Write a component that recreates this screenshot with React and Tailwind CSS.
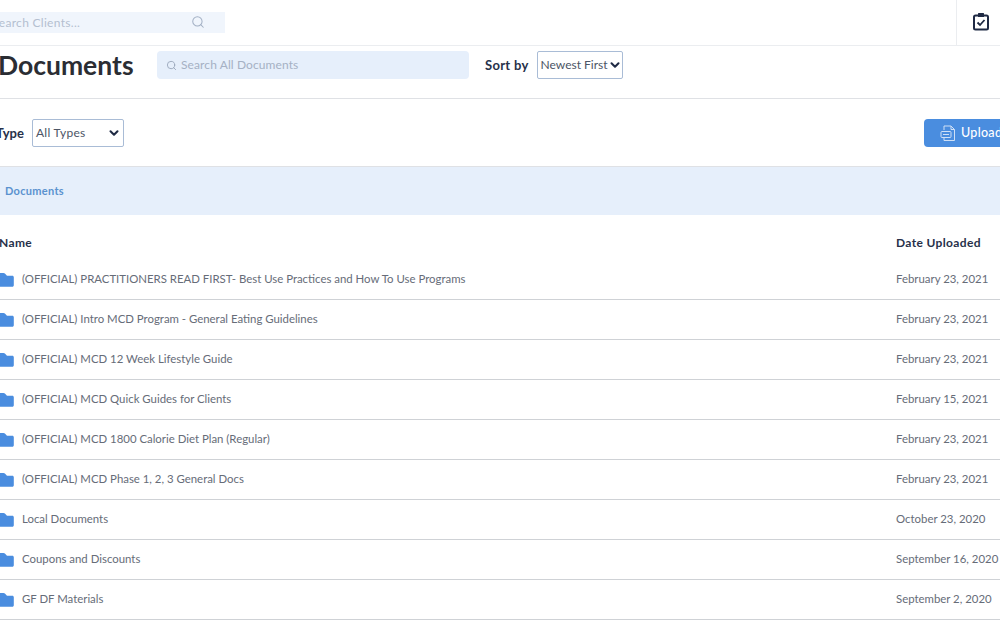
import { Search, ChevronDown } from 'lucide-react'

const rows = [
  ['(OFFICIAL) PRACTITIONERS READ FIRST- Best Use Practices and How To Use Programs', 'February 23, 2021'],
  ['(OFFICIAL) Intro MCD Program - General Eating Guidelines', 'February 23, 2021'],
  ['(OFFICIAL) MCD 12 Week Lifestyle Guide', 'February 23, 2021'],
  ['(OFFICIAL) MCD Quick Guides for Clients', 'February 15, 2021'],
  ['(OFFICIAL) MCD 1800 Calorie Diet Plan (Regular)', 'February 23, 2021'],
  ['(OFFICIAL) MCD Phase 1, 2, 3 General Docs', 'February 23, 2021'],
  ['Local Documents', 'October 23, 2020'],
  ['Coupons and Discounts', 'September 16, 2020'],
  ['GF DF Materials', 'September 2, 2020'],
]

function Folder() {
  return (
    <svg width="16" height="15" viewBox="0 0 16 15" className="shrink-0">
      <path d="M0 1h5.500c.6 0 1 .2 1.400.6L9 3.800h5.300c.9 0 1.500.6 1.500 1.500v8c0 .9-.6 1.500-1.500 1.500H0z" fill="#4a8ddf" />
    </svg>
  )
}

function UploadIcon() {
  return (
    <svg width="16" height="17" viewBox="0 0 16 17" fill="none" stroke="#cfe0f6" strokeWidth="1" className="shrink-0">
      <path d="M4 5V1h7l3.500 3.500V15.500H4V13" />
      <path d="M11 1v3.500h3.500" />
      <rect x="1" y="6.500" width="10" height="6" rx="1" />
      <path d="M3 9.500h6" />
    </svg>
  )
}

function ClipboardIcon() {
  return (
    <svg width="18" height="19" viewBox="0 0 18 19" fill="none" className="shrink-0">
      <rect x="2" y="3.500" width="14" height="14" rx="1.500" stroke="#1f2a44" strokeWidth="2" />
      <path d="M6 1.500c0-.3.200-.5.500-.5h5c.3 0 .5.200.5.500V5H6z" fill="#1f2a44" />
      <path d="M5.500 10.500l2.500 2.500 4.500-5" stroke="#1f2a44" strokeWidth="1.800" />
    </svg>
  )
}

export default function App() {
  return (
    <div className="h-[620px] w-[1000px] overflow-hidden bg-white font-['Lato','Noto_Sans',sans-serif] text-[#1f2a44]">
      <header className="flex h-[46px] items-center justify-between border-b border-[#ebedf0]">
        <div className="-ml-3 flex h-[21px] w-[237px] items-center justify-between bg-[#f0f5fc] pr-5 pl-[4px] text-xs tracking-[0.3px] text-[#b4bfd0]">
          <span className="whitespace-nowrap">Search Clients...</span>
          <Search size={14} strokeWidth={1.75} className="mb-[1px] text-[#a3b0c4]" />
        </div>
        <div className="flex h-[45px] w-[44px] items-center justify-center border-l border-[#ebedf0] pb-[2px] pl-[4px]">
          <ClipboardIcon />
        </div>
      </header>

      <div className="flex h-[53px] items-start border-b border-[#dfe1e5] pt-[5px]">
        <h1 className="-ml-[2px] flex h-[28px] w-[159px] items-center text-[26.5px] leading-none font-bold text-[#2b2d33]">Documents</h1>
        <div className="flex h-[28px] w-[312px] items-center gap-[4px] rounded-sm bg-[#e6effb] pl-[9px] text-xs tracking-[0.1px] text-[#a5b1c4]">
          <Search size={11} strokeWidth={2} className="text-[#9aa7bb]" />
          <span className="whitespace-nowrap">Search All Documents</span>
        </div>
        <span className="mr-[8px] ml-4 flex h-[28px] items-center pt-[1px] text-[13px] font-bold tracking-[0.3px] text-[#27314a]">Sort by</span>
        <div className="flex h-[28px] w-[86px] items-center justify-between rounded-[2px] border border-[#a9bcd6] pr-[1px] pl-[3px] text-xs text-[#4c5566]">
          <span className="whitespace-nowrap">Newest First</span>
          <ChevronDown size={14} strokeWidth={3.5} className="shrink-0 text-[#1f2a44]" />
        </div>
      </div>

      <div className="flex h-[68px] items-center justify-between border-b border-[#dfe1e5] pt-[1px]">
        <div className="-ml-[4px] flex items-center gap-2">
          <span className="pt-[1px] text-[13px] font-bold text-[#27314a]">Type</span>
          <div className="flex h-[28px] w-[92px] items-center justify-between rounded-[2px] border border-[#a9bcd6] pr-[2px] pl-[3px] text-xs tracking-[0.3px] text-[#4c5566]">
            <span>All Types</span>
            <ChevronDown size={14} strokeWidth={3.5} className="text-[#1f2a44]" />
          </div>
        </div>
        <button className="-mr-6 flex h-[28px] w-[100px] items-center gap-[5px] rounded-sm bg-[#4a8ddf] pl-[16px] text-[12.5px] font-medium tracking-[0.3px] text-white">
          <UploadIcon />
          <span className="pt-[1px]">Upload</span>
        </button>
      </div>

      <div className="flex h-[48px] items-center bg-[#e6effb] pl-[5px] text-[11px] font-bold tracking-[0.3px] text-[#5a92cf]">
        Documents
      </div>

      <div className="flex h-[45px] items-center justify-between pt-[11px] text-xs font-bold tracking-[0.35px] text-[#27314a]">
        <span className="-ml-[1px]">Name</span>
        <span className="w-[104px] shrink-0">Date Uploaded</span>
      </div>

      {rows.map(([name, date]) => (
        <div key={name} className="flex h-[40px] items-center justify-between border-b border-[#cfd2d6] text-[11.4px] text-[#666c78]">
          <div className="-ml-[2px] flex items-center gap-[8px]">
            <Folder />
            <span className="pb-[2px]">{name}</span>
          </div>
          <span className="w-[104px] shrink-0 pb-[2px] whitespace-nowrap">{date}</span>
        </div>
      ))}
    </div>
  )
}
